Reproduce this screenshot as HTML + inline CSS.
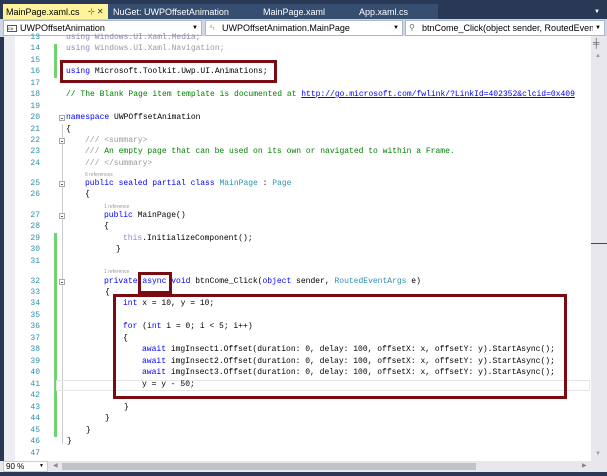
<!DOCTYPE html>
<html><head><meta charset="utf-8"><style>
*{margin:0;padding:0;box-sizing:border-box}
body{width:607px;height:476px;background:#293955;position:relative;overflow:hidden;font-family:"Liberation Sans",sans-serif}
.abs{position:absolute}
.tab{position:absolute;top:5px;height:14px;font-size:9px;line-height:14px;color:#fff;white-space:nowrap}
.dd{position:absolute;top:20px;height:16px;background:#fff;border:1px solid #a9b6cc;font-size:9px;line-height:14px;color:#000;padding-left:16px;white-space:nowrap;overflow:hidden}
.dd .ar{position:absolute;right:3px;top:0;font-size:6px}
#ed{position:absolute;left:4px;top:36px;width:587px;height:425px;background:#fff}
.ln{position:absolute;left:18px;width:22px;text-align:right;font-family:"Liberation Mono",monospace;font-size:8px;color:#2b91af;line-height:10px}
.c{position:absolute;font-family:"Liberation Mono",monospace;font-size:8px;line-height:10px;white-space:pre;color:#000}
.r{position:absolute;font-size:5px;color:#999;line-height:6px;white-space:pre}
.k{color:#0000ff}.t{color:#2b91af}.g{color:#008000}.f{color:#8a8ab0}.fg{color:#9a9a9a}.u{color:#0000ff;text-decoration:underline}
.box{position:absolute;border:3px solid #7a0b12}
.gb{position:absolute;left:54px;width:3px;background:#6fd36f}
.om{position:absolute;left:59px;width:6px;height:6px;border:1px solid #aaa;background:#fff}
.om:after{content:"";position:absolute;left:1px;top:2px;width:2px;height:1px;background:#555}
</style></head><body>
<div class="abs" style="left:108px;top:4px;width:330px;height:16px;background:#364e6f"></div>
<div class="abs" style="left:3px;top:4px;width:105px;height:16px;background:#fff29d"></div>
<div class="tab" style="left:6px;color:#000">MainPage.xaml.cs</div>
<div class="tab" style="left:88px;color:#333;font-size:8px">⊹ ✕</div>
<div class="tab" style="left:113px">NuGet: UWPOffsetAnimation</div>
<div class="tab" style="left:263px">MainPage.xaml</div>
<div class="tab" style="left:359px">App.xaml.cs</div>
<div class="tab" style="left:594px;font-size:6px">▼</div>
<div class="abs" style="left:0;top:19px;width:607px;height:18px;background:#cfd6e5"></div>
<div class="dd" style="left:3px;width:199px"><span class="abs" style="left:3px;top:4px;width:10px;height:7px;border:1px solid #555;font-size:4px;line-height:5px">C#</span>UWPOffsetAnimation<span class="ar">▼</span></div>
<div class="dd" style="left:205px;width:198px"><span class="abs" style="left:3px;top:0;color:#c77a1e;font-size:8px">⁴ₜ</span>UWPOffsetAnimation.MainPage<span class="ar">▼</span></div>
<div class="dd" style="left:405px;width:200px"><span class="abs" style="left:3px;top:0;color:#666;font-size:8px">⚲</span>btnCome_Click(object sender, RoutedEvent<span class="ar" style="background:#fff;padding-left:2px">▼</span></div>
<div id="ed"></div>
<div class="abs" style="left:4px;top:36px;width:11px;height:425px;background:#eeeef2"></div>
<div class="abs" style="left:591px;top:36px;width:16px;height:425px;background:#e8e8ec"></div>
<div class="abs" style="left:593px;top:38px;font-size:9px;color:#555">╪</div>
<div class="abs" style="left:595px;top:53px;font-size:6px;color:#999">▲</div>
<div class="abs" style="left:595px;top:451px;font-size:6px;color:#999">▼</div>
<div class="abs" style="left:591px;top:243px;width:16px;height:1px;background:#33f"></div>
<div class="abs" style="left:0;top:461px;width:607px;height:11px;background:#e8e8ec"></div>
<div class="abs" style="left:3px;top:461px;width:45px;height:11px;background:#fff;border:1px solid #ccc;font-size:8px;line-height:9px;padding-left:2px">90 %<span style="position:absolute;right:3px;font-size:5px">▼</span></div>
<div class="abs" style="left:53px;top:461px;font-size:6px;color:#888;line-height:11px">◀</div>
<div class="abs" style="left:62px;top:463px;width:414px;height:7px;background:#c2c3c9"></div>
<div class="abs" style="left:582px;top:461px;font-size:6px;color:#888;line-height:11px">▶</div>

<div class="gb" style="top:44px;height:34px"></div>
<div class="gb" style="top:233px;height:204px"></div>
<div class="abs" style="left:62px;top:124px;width:1px;height:320px;background:#ccc"></div>
<div class="om" style="top:115px"></div>
<div class="om" style="top:138px"></div>
<div class="om" style="top:181px"></div>
<div class="om" style="top:213px"></div>
<div class="om" style="top:279px"></div>
<div class="abs" style="left:56px;top:380px;width:534px;height:11px;border:1px solid #e6e6e6"></div>

<div class="ln" style="top:33px">13</div><div class="c f" style="left:66px;top:33px">using Windows.UI.Xaml.Media;</div>
<div class="ln" style="top:44px">14</div><div class="c f" style="left:66px;top:44px">using <span class="fg">Windows.UI.Xaml.Navigation;</span></div>
<div class="ln" style="top:56px">15</div>
<div class="ln" style="top:67px">16</div><div class="c" style="left:66px;top:67px"><span class="k">using</span> Microsoft.Toolkit.Uwp.UI.Animations;</div>
<div class="ln" style="top:79px">17</div>
<div class="ln" style="top:90px">18</div><div class="c" style="left:66px;top:90px"><span class="g">// The Blank Page item template is documented at </span><span class="u">http://go.microsoft.com/fwlink/?LinkId=402352&amp;clcid=0x409</span></div>
<div class="ln" style="top:102px">19</div>
<div class="ln" style="top:113px">20</div><div class="c" style="left:66px;top:113px"><span class="k">namespace</span> UWPOffsetAnimation</div>
<div class="ln" style="top:125px">21</div><div class="c" style="left:66px;top:125px">{</div>
<div class="ln" style="top:136px">22</div><div class="c" style="left:85px;top:136px"><span class="fg">/// &lt;summary&gt;</span></div>
<div class="ln" style="top:147px">23</div><div class="c" style="left:85px;top:147px"><span class="fg">///</span><span class="g"> An empty page that can be used on its own or navigated to within a Frame.</span></div>
<div class="ln" style="top:159px">24</div><div class="c" style="left:85px;top:159px"><span class="fg">/// &lt;/summary&gt;</span></div>
<div class="r" style="left:85px;top:172px">6 references</div>
<div class="ln" style="top:179px">25</div><div class="c" style="left:85px;top:179px"><span class="k">public sealed partial class</span> <span class="t">MainPage</span> : <span class="t">Page</span></div>
<div class="ln" style="top:190px">26</div><div class="c" style="left:85px;top:190px">{</div>
<div class="r" style="left:104px;top:204px">1 reference</div>
<div class="ln" style="top:211px">27</div><div class="c" style="left:104px;top:211px"><span class="k">public</span> MainPage()</div>
<div class="ln" style="top:222px">28</div><div class="c" style="left:104px;top:222px">{</div>
<div class="ln" style="top:234px">29</div><div class="c" style="left:123px;top:234px"><span class="k" style="color:#8a8ad8">this</span>.InitializeComponent();</div>
<div class="ln" style="top:245px">30</div><div class="c" style="left:116px;top:245px">}</div>
<div class="ln" style="top:257px">31</div>
<div class="r" style="left:104px;top:269px">1 reference</div>
<div class="ln" style="top:277px">32</div><div class="c" style="left:104px;top:277px"><span class="k">private async void</span> btnCome_Click(<span class="k">object</span> sender, <span class="t">RoutedEventArgs</span> e)</div>
<div class="ln" style="top:288px">33</div><div class="c" style="left:105px;top:288px">{</div>
<div class="ln" style="top:299px">34</div><div class="c" style="left:123px;top:299px"><span class="k">int</span> x = 10, y = 10;</div>
<div class="ln" style="top:311px">35</div>
<div class="ln" style="top:322px">36</div><div class="c" style="left:123px;top:322px"><span class="k">for</span> (<span class="k">int</span> i = 0; i &lt; 5; i++)</div>
<div class="ln" style="top:334px">37</div><div class="c" style="left:123px;top:334px">{</div>
<div class="ln" style="top:345px">38</div><div class="c" style="left:142px;top:345px"><span class="k">await</span> imgInsect1.Offset(duration: 0, delay: 100, offsetX: x, offsetY: y).StartAsync();</div>
<div class="ln" style="top:357px">39</div><div class="c" style="left:142px;top:357px"><span class="k">await</span> imgInsect2.Offset(duration: 0, delay: 100, offsetX: x, offsetY: y).StartAsync();</div>
<div class="ln" style="top:368px">40</div><div class="c" style="left:142px;top:368px"><span class="k">await</span> imgInsect3.Offset(duration: 0, delay: 100, offsetX: x, offsetY: y).StartAsync();</div>
<div class="ln" style="top:380px">41</div><div class="c" style="left:142px;top:380px">y = y - 50;</div>
<div class="ln" style="top:391px">42</div>
<div class="ln" style="top:403px">43</div><div class="c" style="left:124px;top:403px">}</div>
<div class="ln" style="top:414px">44</div><div class="c" style="left:105px;top:414px">}</div>
<div class="ln" style="top:426px">45</div><div class="c" style="left:86px;top:426px">}</div>
<div class="ln" style="top:437px">46</div><div class="c" style="left:67px;top:437px">}</div>
<div class="ln" style="top:449px">47</div>

<div class="box" style="left:60px;top:60px;width:217px;height:23px"></div>
<div class="box" style="left:138px;top:272px;width:34px;height:22px"></div>
<div class="box" style="left:113px;top:294px;width:454px;height:105px"></div>
</body></html>
